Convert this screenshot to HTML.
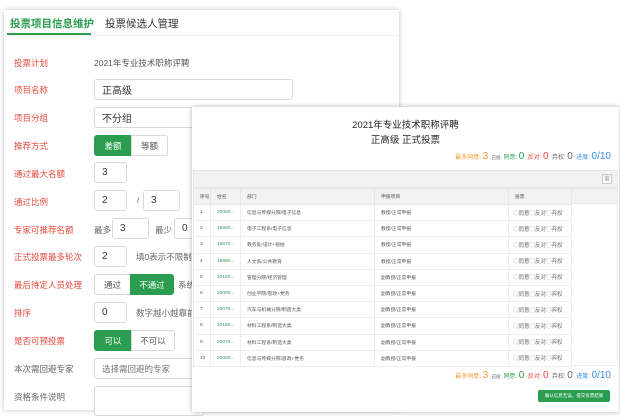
<!DOCTYPE html>
<html><head><meta charset="utf-8"><style>
*{margin:0;padding:0;box-sizing:border-box}
body{width:620px;height:420px;background:#fff;position:relative;overflow:hidden;font-family:"Liberation Sans","Noto Sans CJK SC",sans-serif;color:#333}
.a{position:absolute}
.back{left:4px;top:10px;width:395px;height:400px;background:#fff;box-shadow:0 0 5px rgba(0,0,0,.25)}
.tab{font-size:10.5px;top:6px}
.lab{left:10px;font-size:8.5px;color:#e8493e}
.lab.g{color:#666}
.inp{border:1px solid #d9d9d9;border-radius:3px;background:#fff;font-size:10px;padding-left:7px;display:flex;align-items:center;height:21px}
.btn{border:1px solid #d9d9d9;font-size:8.5px;display:flex;align-items:center;justify-content:center;height:21px;background:#fff;color:#555}
.btn.on{background:#2a9d4e;border-color:#2a9d4e;color:#fff}
.tx{font-size:8.5px;color:#666}
.front{left:192px;top:107px;width:427px;height:305px;background:#fff;box-shadow:0 0 5px rgba(0,0,0,.3)}
table{border-collapse:collapse;position:absolute;left:1px;top:81px;width:378px;font-size:4.8px;color:#555;table-layout:fixed}
td{border:1px solid #eee;height:16.2px;padding-left:6px;white-space:nowrap;overflow:hidden}
td.v{font-size:5.5px;padding-left:4px;color:#666}
tr.h td{background:#f2f2f2;height:16px;border-color:#e6e6e6}
.gn{color:#2a9d4e}
.st{font-size:6px;white-space:nowrap}
.st b{font-size:10px;font-weight:normal}
</style></head><body>
<div class="a back">
 <div class="a tab" style="left:6px;color:#2a9d4e;font-weight:bold">投票项目信息维护</div>
 <div class="a tab" style="left:101px;color:#333">投票候选人管理</div>
 <div class="a" style="left:3px;top:23px;width:84px;height:2px;background:#2a9d4e"></div>
 <div class="a" style="left:3px;top:25px;width:392px;height:1px;background:#eee"></div>
 <div class="a lab" style="top:47px">投票计划</div>
 <div class="a tx" style="left:90px;top:47px;color:#555">2021年专业技术职称评聘</div>
 <div class="a lab" style="top:74px">项目名称</div>
 <div class="a inp" style="left:90px;top:69px;width:199px">正高级</div>
 <div class="a lab" style="top:102px">项目分组</div>
 <div class="a inp" style="left:90px;top:97px;width:110px">不分组</div>
 <div class="a lab" style="top:130px">推荐方式</div>
 <div class="a btn on" style="left:90px;top:125px;width:38px;border-radius:3px 0 0 3px">差额</div>
 <div class="a btn" style="left:127px;top:125px;width:37px;border-radius:0 3px 3px 0">等额</div>
 <div class="a lab" style="top:158px">通过最大名额</div>
 <div class="a inp" style="left:90px;top:152px;width:33px">3</div>
 <div class="a lab" style="top:186px">通过比例</div>
 <div class="a inp" style="left:90px;top:180px;width:33px">2</div>
 <div class="a tx" style="left:133px;top:185px">/</div>
 <div class="a inp" style="left:139px;top:180px;width:37px">3</div>
 <div class="a lab" style="top:214px">专家可推荐名额</div>
 <div class="a tx" style="left:90px;top:214px">最多</div>
 <div class="a inp" style="left:108px;top:208px;width:37px">3</div>
 <div class="a tx" style="left:151px;top:214px">最少</div>
 <div class="a inp" style="left:170px;top:208px;width:30px">0</div>
 <div class="a lab" style="top:241px">正式投票最多轮次</div>
 <div class="a inp" style="left:90px;top:236px;width:33px">2</div>
 <div class="a tx" style="left:132px;top:241px">填0表示不限制轮次</div>
 <div class="a lab" style="top:269px">最后待定人员处理</div>
 <div class="a btn" style="left:90px;top:264px;width:37px;border-radius:3px 0 0 3px">通过</div>
 <div class="a btn on" style="left:126px;top:264px;width:44px;border-radius:0 3px 3px 0">不通过</div>
 <div class="a tx" style="left:174px;top:269px">系统</div>
 <div class="a lab" style="top:297px">排序</div>
 <div class="a inp" style="left:90px;top:292px;width:33px">0</div>
 <div class="a tx" style="left:132px;top:297px">数字越小越靠前</div>
 <div class="a lab" style="top:325px">是否可预投票</div>
 <div class="a btn on" style="left:90px;top:320px;width:38px;border-radius:3px 0 0 3px">可以</div>
 <div class="a btn" style="left:127px;top:320px;width:44px;border-radius:0 3px 3px 0">不可以</div>
 <div class="a lab g" style="top:353px">本次需回避专家</div>
 <div class="a inp" style="left:90px;top:348px;width:110px;font-size:8.5px;color:#777">选择需回避的专家</div>
 <div class="a lab g" style="top:381px">资格条件说明</div>
 <div class="a inp" style="left:90px;top:376px;width:110px;height:30px"></div>
</div>
<div class="a front">
 <div class="a" style="left:0;width:427px;top:10px;text-align:center;font-size:9.5px;color:#222">2021年专业技术职称评聘</div>
 <div class="a" style="left:0;width:427px;top:25px;text-align:center;font-size:9.5px;color:#222">正高级 正式投票</div>
 <div class="a st" style="right:8px;top:44px"><span style="color:#f39a2b">最多同意: <b>3</b></span> &nbsp;<span style="color:#555;font-size:4.5px">已投:</span> <span style="color:#2a9d4e">同意: <b>0</b></span> &nbsp;<span style="color:#e8493e">反对: <b>0</b></span> &nbsp;<span style="color:#666">弃权: <b>0</b></span> &nbsp;<span style="color:#3a8ee6">进度: <b>0/10</b></span></div>
 <div class="a" style="left:1px;top:63px;width:425px;height:18px;background:#f2f2f2;border:1px solid #e6e6e6"></div>
 <div class="a" style="left:410px;top:67px;width:10px;height:10px;border:1px solid #ccc;background:#fafafa;font-size:5px;text-align:center;line-height:9px;color:#666">▦</div>
 <div class="a" style="left:379px;top:81px;width:47px;height:16px;background:#f2f2f2;border:1px solid #e6e6e6"></div>
 <table>
  <colgroup><col style="width:17px"><col style="width:30px"><col style="width:134px"><col style="width:134px"><col style="width:63px"></colgroup>
  <tr class="h"><td>序号</td><td>姓名</td><td>部门</td><td>申报项目</td><td>投票</td></tr>
  <tr><td>1</td><td class="gn">20000...</td><td>信息与传媒分院/电子信息</td><td>教授/正常申报</td><td class="v">◯同意◯反对◯弃权</td></tr>
  <tr><td>2</td><td class="gn">19860...</td><td>电子工程系/电子信息</td><td>教授/正常申报</td><td class="v">◯同意◯反对◯弃权</td></tr>
  <tr><td>3</td><td class="gn">19970...</td><td>教务处/设计+视拍</td><td>教授/正常申报</td><td class="v">◯同意◯反对◯弃权</td></tr>
  <tr><td>4</td><td class="gn">19880...</td><td>人文系/公共教育</td><td>教授/正常申报</td><td class="v">◯同意◯反对◯弃权</td></tr>
  <tr><td>5</td><td class="gn">20120...</td><td>管理分院/经济管理</td><td>副教授/正常申报</td><td class="v">◯同意◯反对◯弃权</td></tr>
  <tr><td>6</td><td class="gn">20000...</td><td>创业学院/思政+党务</td><td>副教授/正常申报</td><td class="v">◯同意◯反对◯弃权</td></tr>
  <tr><td>7</td><td class="gn">20070...</td><td>汽车与机械分院/制造大类</td><td>副教授/正常申报</td><td class="v">◯同意◯反对◯弃权</td></tr>
  <tr><td>8</td><td class="gn">20150...</td><td>材料工程系/制造大类</td><td>副教授/正常申报</td><td class="v">◯同意◯反对◯弃权</td></tr>
  <tr><td>9</td><td class="gn">20070...</td><td>材料工程系/制造大类</td><td>副教授/正常申报</td><td class="v">◯同意◯反对◯弃权</td></tr>
  <tr><td>10</td><td class="gn">20000...</td><td>信息与传媒分院/思政+党务</td><td>副教授/正常申报</td><td class="v">◯同意◯反对◯弃权</td></tr>
 </table>
 <div class="a" style="left:379px;top:97px;width:47px;height:162px;border-right:1px solid #eee;border-bottom:1px solid #eee"></div>
 <div class="a st" style="right:8px;top:263px"><span style="color:#f39a2b">最多同意: <b>3</b></span> &nbsp;<span style="color:#555;font-size:4.5px">已投:</span> <span style="color:#2a9d4e">同意: <b>0</b></span> &nbsp;<span style="color:#e8493e">反对: <b>0</b></span> &nbsp;<span style="color:#666">弃权: <b>0</b></span> &nbsp;<span style="color:#3a8ee6">进度: <b>0/10</b></span></div>
 <div class="a" style="left:346px;top:283px;width:72px;height:12px;background:#2a9d4e;border-radius:2px;color:#fff;font-size:4.5px;text-align:center;line-height:12px">确认信息无误，提交投票结果</div>
</div>
</body></html>
